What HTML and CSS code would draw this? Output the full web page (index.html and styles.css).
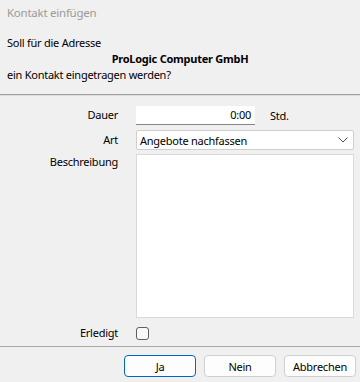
FILE: index.html
```html
<!DOCTYPE html>
<html lang="de">
<head>
<meta charset="UTF-8">
<title>Kontakt einfügen</title>
<link rel="stylesheet" href="styles.css">
</head>
<body>
<div class="dialog">
  <div class="title">Kontakt einfügen</div>

  <div class="message">
    <p>Soll für die Adresse</p>
    <p class="company">ProLogic Computer GmbH</p>
    <p>ein Kontakt eingetragen werden?</p>
  </div>

  <div class="form">
    <label class="lbl row-dauer">Dauer</label>
    <div class="field row-dauer">
      <div class="duration">0:00</div>
      <span class="unit">Std.</span>
    </div>

    <label class="lbl row-art">Art</label>
    <div class="select">
      <span>Angebote nachfassen</span>
      <svg width="10" height="6" viewBox="0 0 10 6"><path d="M0.5 0.5 L5 5 L9.5 0.5" fill="none" stroke="#555" stroke-width="1"/></svg>
    </div>

    <label class="lbl lbl-top">Beschreibung</label>
    <div class="textarea"></div>

    <label class="lbl row-check">Erledigt</label>
    <div class="field row-check"><span class="checkbox"></span></div>
  </div>

  <div class="buttons">
    <button class="btn btn-default">Ja</button>
    <button class="btn">Nein</button>
    <button class="btn">Abbrechen</button>
  </div>
</div>
</body>
</html>
```

FILE: styles.css
```css
body, html {
  margin: 0;
  height: 100%;
  background: #f0f0f0;
  font-family: "Noto Sans", Arial, sans-serif;
  font-size: 11px;
  letter-spacing: -0.25px;
  color: #000;
}

.dialog {
  display: flex;
  flex-direction: column;
  height: 100%;
}

.title {
  height: 26px;
  line-height: 26px;
  padding-left: 7px;
  color: #9a9a9a;
  font-size: 11.5px;
}

.message {
  padding: 9px 7px 11px;
  border-bottom: 1px solid #a0a0a0;
  box-shadow: 0 1px 0 #dcdcdc;
}
.message p {
  margin: 0;
  line-height: 16px;
}
.message .company {
  text-align: center;
  font-weight: bold;
}

.form {
  display: grid;
  grid-template-columns: 118px 1fr;
  column-gap: 18px;
  padding: 10px 6px 0 0;
  flex: 1;
  align-content: start;
}

.lbl {
  text-align: right;
  line-height: 20px;
}
.lbl-top {
  line-height: 16px;
  margin-top: 4px;
}

.field {
  display: flex;
  align-items: center;
}

.duration {
  width: 115px;
  height: 18px;
  line-height: 18px;
  padding: 0 4px 0 0;
  background: #fff;
  border-bottom: 1px solid #868686;
  text-align: right;
}
.unit {
  margin-left: 15px;
}

.select {
  margin-top: 5px;
  height: 18px;
  border: 1px solid #cfcfcf;
  border-radius: 2px;
  background: #fff;
  display: flex;
  align-items: center;
  justify-content: space-between;
  padding: 0 5px 0 3px;
}
.row-art { margin-top: 5px; }

.textarea {
  margin-top: 4px;
  height: 162px;
  border: 1px solid #dadada;
  background: #fff;
}

.row-check {
  margin-top: 8px;
  height: 14px;
  line-height: 14px;
}
.checkbox {
  width: 11px;
  height: 11px;
  border: 1px solid #5f5f5f;
  border-radius: 3px;
  background: #f8f8f8;
}

.buttons {
  display: flex;
  justify-content: flex-end;
  gap: 8px;
  border-top: 1px solid #a8a8a8;
  padding: 8px 4px 5px 0;
}
.btn {
  width: 72px;
  height: 22px;
  border: 1px solid #d0d0d0;
  border-radius: 4px;
  background: #fdfdfd;
  font-family: "Noto Sans", Arial, sans-serif;
  font-size: 11px;
  letter-spacing: -0.25px;
  color: #000;
  padding: 0;
}
.btn-default {
  border-color: #0067c0;
}
```
